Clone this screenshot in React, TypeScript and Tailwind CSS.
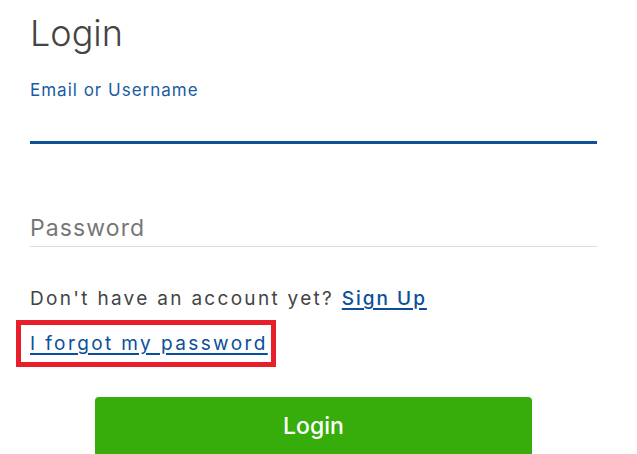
import React from "react";

export default function App() {
  return (
    <div className="w-[637px] h-[454px] overflow-hidden bg-white font-['Inter',sans-serif]">
      <div className="pl-[30px] w-[597px]">
        <h1 className="mt-[15px] text-[36px] leading-[36px] font-light text-[#444444]">Login</h1>
        <label className="block mt-[31px] text-[17px] leading-[17px] text-[#1b5ba3] tracking-[1px]">Email or Username</label>
        <div className="h-[45px] border-b-[3px] border-[#0d5298]"></div>
        <div className="pt-[73px] pb-[6px] border-b border-[#dddddd]">
          <div className="text-[23px] leading-[23px] text-[#777777] tracking-[1.1px]">Password</div>
        </div>
        <p className="mt-[42px] text-[19px] leading-[19px] text-[#444444] tracking-[2.3px] whitespace-nowrap">
          Don't have an account yet?{" "}
          <a href="#" className="text-[#0b4f9c] font-medium underline decoration-[2px] underline-offset-[3px] tracking-[2px]">Sign Up</a>
        </p>
      </div>
      <div className="ml-[16px] mt-[12px] w-[260px] h-[47px] border-[5px] border-[#e81f2a] pl-[9px] pt-[9px]">
        <a href="#" className="block text-[19px] leading-[19px] text-[#0b4f9c] underline decoration-[2px] underline-offset-[3px] tracking-[2.4px] whitespace-nowrap">I forgot my password</a>
      </div>
      <button className="ml-[95px] mt-[30px] w-[437px] h-[60px] rounded-[4px] bg-[#36ad0a] flex justify-center items-start pt-[18px] text-white text-[23px] leading-[23px] font-medium">
        Login
      </button>
    </div>
  );
}
